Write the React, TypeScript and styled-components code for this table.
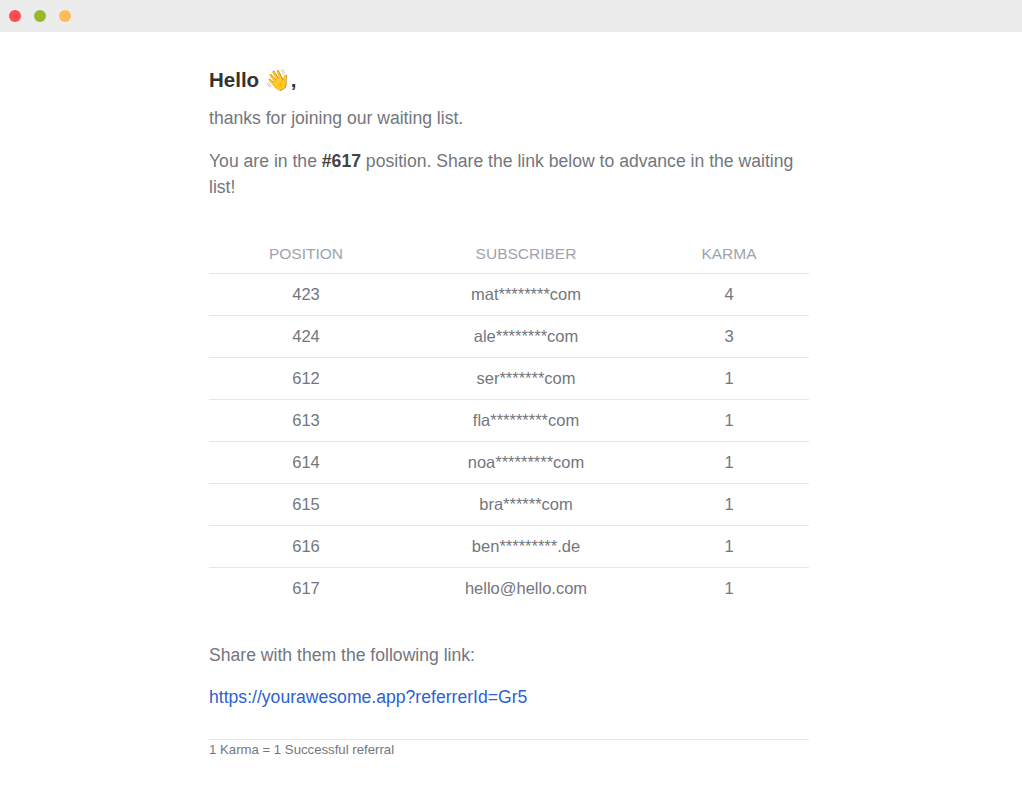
import React from "react";
import styled, { createGlobalStyle } from "styled-components";

const GlobalStyle = createGlobalStyle`
    body {
        margin: 0;
        background: #ffffff;
        font-family: "Liberation Sans", Arial, sans-serif;
    }
`;

const Window = styled.div`
    width: 1022px;
    min-height: 803px;
    background: #fff;
`;

const TitleBar = styled.div`
    height: 32px;
    background: #ececec;
    display: flex;
    align-items: center;
    gap: 13px;
    padding-left: 9px;
`;

const Dot = styled.span<{ $color: string }>`
    width: 12px;
    height: 12px;
    border-radius: 50%;
    background: ${(p) => p.$color};
`;

const Content = styled.div`
    width: 600px;
    margin: 0 auto;
    padding: 35px 0 40px;
    position: relative;
    left: -2px;
    color: #74767d;
    font-size: 17.6px;
`;

const Heading = styled.h1`
    margin: 0 0 12px;
    font-size: 20.5px;
    line-height: 26px;
    font-weight: bold;
    color: #333;
`;

const Paragraph = styled.p<{ $gap?: number }>`
    margin: 0 0 ${(p) => p.$gap ?? 17}px;
    line-height: 26px;
`;

const Strong = styled.strong`
    color: #444;
`;

const Table = styled.table`
    width: 600px;
    border-collapse: collapse;
    margin: 33px 0 32px;
`;

const HeadCell = styled.th<{ $width: number }>`
    width: ${(p) => p.$width}px;
    height: 38px;
    padding: 2px 0 0;
    font-size: 15.5px;
    font-weight: normal;
    color: #9ea3ae;
    text-transform: uppercase;
    text-align: center;
    border-bottom: 1px solid #e6e7ea;
`;

const Row = styled.tr<{ $last?: boolean }>`
    height: 42px;
    border-bottom: ${(p) => (p.$last ? "none" : "1px solid #e6e7ea")};
`;

const Cell = styled.td`
    padding: 0;
    text-align: center;
    font-size: 16.5px;
    color: #74767d;
`;

const Link = styled.a`
    color: #2d5fd3;
    text-decoration: none;
`;

const Divider = styled.hr`
    border: none;
    border-top: 1px solid #e6e7ea;
    margin: 29px 0 2px;
`;

const Footnote = styled.div`
    font-size: 13.2px;
    line-height: 16px;
    color: #74767d;
`;

const rows = [
    ["423", "mat********com", "4"],
    ["424", "ale********com", "3"],
    ["612", "ser*******com", "1"],
    ["613", "fla*********com", "1"],
    ["614", "noa*********com", "1"],
    ["615", "bra******com", "1"],
    ["616", "ben*********.de", "1"],
    ["617", "hello@hello.com", "1"],
];

const App = () => {
    return (
        <Window>
            <GlobalStyle />
            <TitleBar>
                <Dot $color="#fc4c4f" />
                <Dot $color="#97b92a" />
                <Dot $color="#fdbc5a" />
            </TitleBar>
            <Content>
                <Heading>Hello 👋,</Heading>
                <Paragraph>thanks for joining our waiting list.</Paragraph>
                <Paragraph>
                    You are in the <Strong>#617</Strong> position. Share the link below to advance in the waiting list!
                </Paragraph>
                <Table>
                    <thead>
                        <tr>
                            <HeadCell $width={194}>Position</HeadCell>
                            <HeadCell $width={246}>Subscriber</HeadCell>
                            <HeadCell $width={160}>Karma</HeadCell>
                        </tr>
                    </thead>
                    <tbody>
                        {rows.map((r, i) => (
                            <Row key={r[0]} $last={i === rows.length - 1}>
                                <Cell>{r[0]}</Cell>
                                <Cell>{r[1]}</Cell>
                                <Cell>{r[2]}</Cell>
                            </Row>
                        ))}
                    </tbody>
                </Table>
                <Paragraph $gap={16}>Share with them the following link:</Paragraph>
                <Paragraph $gap={0}>
                    <Link href="#">https://yourawesome.app?referrerId=Gr5</Link>
                </Paragraph>
                <Divider />
                <Footnote>1 Karma = 1 Successful referral</Footnote>
            </Content>
        </Window>
    );
};

export default App;
